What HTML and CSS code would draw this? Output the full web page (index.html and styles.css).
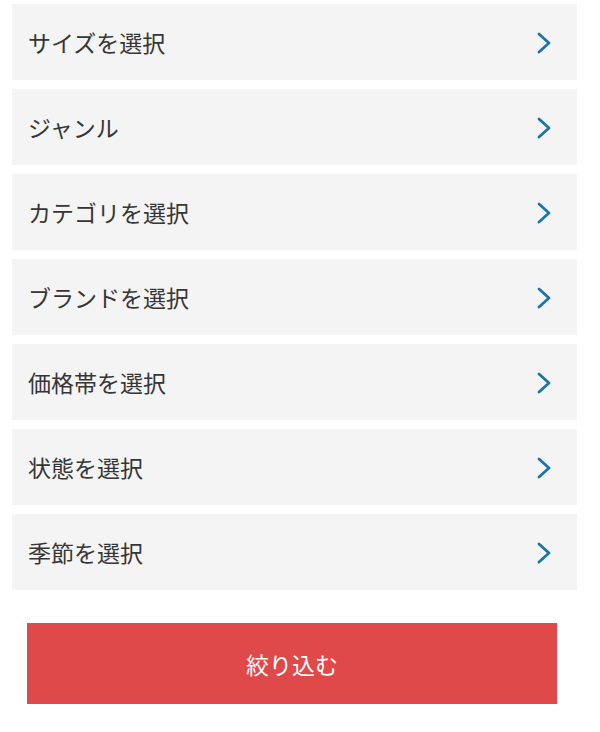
FILE: index.html
```html
<!DOCTYPE html>
<html lang="ja">
<head>
<meta charset="utf-8">
<link rel="stylesheet" href="styles.css">
</head>
<body>
<div class="page">
  <ul class="filters">
    <li class="row"><span class="label">サイズを選択</span><svg class="chev" viewBox="0 0 14 22"><path d="M2 2 L12 11 L2 20"/></svg></li>
    <li class="row"><span class="label">ジャンル</span><svg class="chev" viewBox="0 0 14 22"><path d="M2 2 L12 11 L2 20"/></svg></li>
    <li class="row"><span class="label">カテゴリを選択</span><svg class="chev" viewBox="0 0 14 22"><path d="M2 2 L12 11 L2 20"/></svg></li>
    <li class="row"><span class="label">ブランドを選択</span><svg class="chev" viewBox="0 0 14 22"><path d="M2 2 L12 11 L2 20"/></svg></li>
    <li class="row"><span class="label">価格帯を選択</span><svg class="chev" viewBox="0 0 14 22"><path d="M2 2 L12 11 L2 20"/></svg></li>
    <li class="row"><span class="label">状態を選択</span><svg class="chev" viewBox="0 0 14 22"><path d="M2 2 L12 11 L2 20"/></svg></li>
    <li class="row"><span class="label">季節を選択</span><svg class="chev" viewBox="0 0 14 22"><path d="M2 2 L12 11 L2 20"/></svg></li>
  </ul>
  <div class="actions">
    <button class="submit">絞り込む</button>
  </div>
</div>
</body>
</html>
```
FILE: styles.css
```css
* { box-sizing: border-box; }
html, body { margin: 0; padding: 0; background: #fff; }
body {
  font-family: "Noto Sans CJK JP", "Noto Sans", sans-serif;
  color: #333;
}
.page {
  width: 600px;
  padding: 4px 23px 0 12px;
}
.filters {
  list-style: none;
  margin: 0;
  padding: 0;
  display: flex;
  flex-direction: column;
  gap: 9px;
}
.row {
  height: 76px;
  background: #f4f4f4;
  display: flex;
  align-items: center;
  justify-content: space-between;
  padding: 0 26px 0 16px;
}
.label {
  font-size: 23px;
  line-height: 1;
  color: #363636;
}
.chev {
  width: 14px;
  height: 22px;
  margin-top: 2px;
  fill: none;
  stroke: #1b74a8;
  stroke-width: 2.8;
  stroke-linecap: round;
  stroke-linejoin: round;
}
.actions {
  padding: 33px 20px 0 15px;
}
.submit {
  display: block;
  width: 530px;
  height: 81px;
  border: 0;
  background: #e04949;
  color: #fff;
  font-family: "Noto Sans CJK JP", "Noto Sans", sans-serif;
  font-size: 23px;
  padding: 0;
}
```
